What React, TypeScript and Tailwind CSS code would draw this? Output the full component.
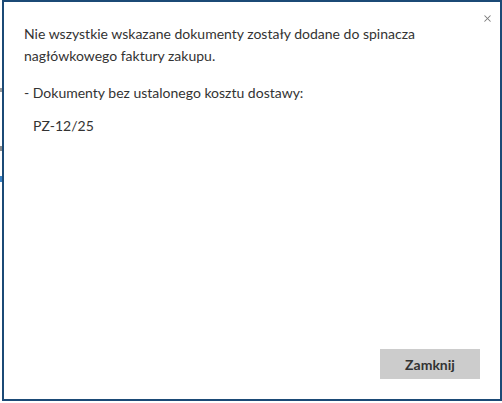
import { X } from 'lucide-react';

const App = () => {
    return (
        <div className="w-[502px] h-[403px] flex bg-white overflow-hidden" style={{ fontFamily: 'Lato, "Open Sans", sans-serif' }}>
            {/* strip of the window behind the dialog */}
            <div className="w-[2px] h-full relative bg-white">
                <div className="absolute left-0 top-[88px] w-[2px] h-[4px] bg-[#9a9a9a]" />
                <div className="absolute left-0 top-[146px] w-[2px] h-[5px] bg-[#8a8a8a]" />
                <div className="absolute left-0 top-[176px] w-[2px] h-[6px] bg-[#3b82c4]" />
            </div>
            <div className="flex-1 h-[401px] border-2 border-[#1b4a76] bg-white flex flex-col relative">
                <button className="absolute right-[7px] top-[11px] text-[#7a7a7a]">
                    <X className="w-[11px] h-[11px]" strokeWidth={2.2} />
                </button>
                <div className="pl-[20px] pr-[40px] pt-[21px] text-[14px] leading-[22px] text-[#333333]">
                    <p>Nie wszystkie wskazane dokumenty zostały dodane do spinacza nagłówkowego faktury zakupu.</p>
                    <p className="mt-[15px]">- Dokumenty bez ustalonego kosztu dostawy:</p>
                    <p className="mt-[11px] pl-[9px]">PZ-12/25</p>
                </div>
                <div className="mt-auto flex justify-end pr-[20px] pb-[20px]">
                    <button className="w-[100px] h-[30px] bg-[#cccccc] text-[14px] font-bold text-[#333333]">
                        Zamknij
                    </button>
                </div>
            </div>
        </div>
    );
};

export default App;
